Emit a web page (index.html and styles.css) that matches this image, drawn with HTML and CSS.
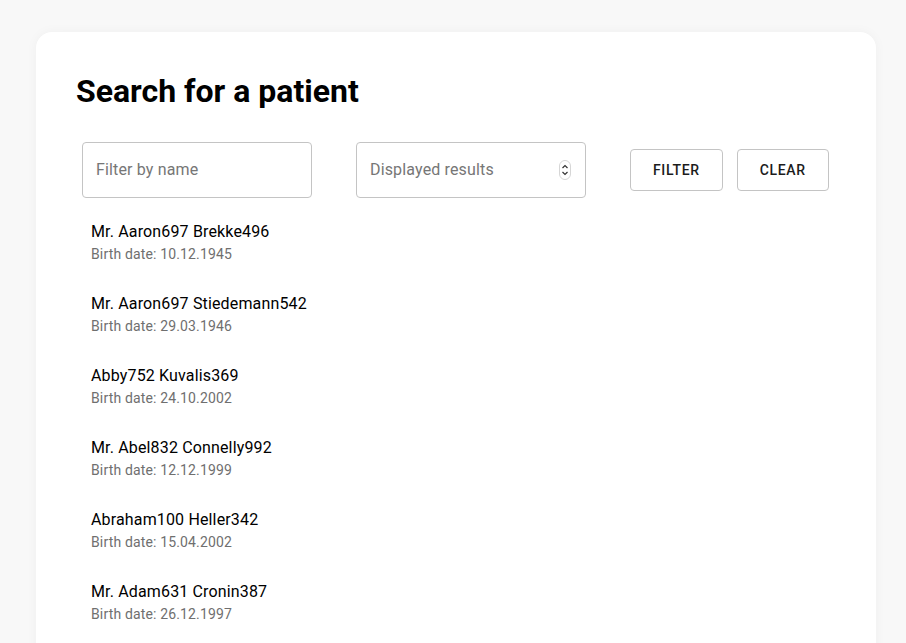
FILE: index.html
```html
<!DOCTYPE html>
<html lang="en">
<head>
<meta charset="utf-8">
<title>Search for a patient</title>
<link rel="stylesheet" href="styles.css">
</head>
<body>
<main class="card">
  <h1 class="title">Search for a patient</h1>
  <form class="filters">
    <div class="field"><input class="field-input" type="text" placeholder="Filter by name"></div>
    <div class="field">
      <input class="field-input" type="text" placeholder="Displayed results">
      <svg class="spinner" width="12" height="20" viewBox="0 0 12 20">
        <rect x="0.5" y="0.5" width="11" height="19" rx="5.5" fill="#fff" stroke="#d6d6d6"/>
        <path d="M3.5 8 L6 5.5 L8.5 8" fill="none" stroke="#333" stroke-width="1.2"/>
        <path d="M3.5 12 L6 14.5 L8.5 12" fill="none" stroke="#333" stroke-width="1.2"/>
      </svg>
    </div>
    <div class="buttons">
      <button class="btn" type="button">Filter</button>
      <button class="btn" type="button">Clear</button>
    </div>
  </form>
  <ul class="patients">
    <li class="patient"><div class="name">Mr. Aaron697 Brekke496</div><div class="dob">Birth date: 10.12.1945</div></li>
    <li class="patient"><div class="name">Mr. Aaron697 Stiedemann542</div><div class="dob">Birth date: 29.03.1946</div></li>
    <li class="patient"><div class="name">Abby752 Kuvalis369</div><div class="dob">Birth date: 24.10.2002</div></li>
    <li class="patient"><div class="name">Mr. Abel832 Connelly992</div><div class="dob">Birth date: 12.12.1999</div></li>
    <li class="patient"><div class="name">Abraham100 Heller342</div><div class="dob">Birth date: 15.04.2002</div></li>
    <li class="patient"><div class="name">Mr. Adam631 Cronin387</div><div class="dob">Birth date: 26.12.1997</div></li>
  </ul>
</main>
</body>
</html>
```
FILE: styles.css
```css
* { box-sizing: border-box; }
html, body { margin: 0; padding: 0; }
body {
  background: #f8f8f8;
  font-family: Roboto, "Liberation Sans", sans-serif;
  color: #000;
  padding: 32px 30px 0 36px;
  height: 643px;
  overflow: hidden;
}
.card {
  background: #fff;
  border-radius: 16px;
  box-shadow: 0 0 12px rgba(0,0,0,0.04);
  padding: 40px 40px 40px 40px;
  min-height: 700px;
}
.title {
  margin: 0;
  font-size: 32px;
  font-weight: 700;
  line-height: 38px;
  letter-spacing: 0;
}
.filters {
  display: flex;
  align-items: center;
  margin-top: 32px;
  padding-left: 6px;
}
.field {
  width: 230px;
  height: 56px;
  border: 1px solid #c4c4c4;
  border-radius: 4px;
  display: flex;
  align-items: center;
  padding: 0 14px 0 13px;
  margin-right: 44px;
}
.field-input {
  flex: 1;
  min-width: 0;
  border: 0;
  outline: 0;
  font-family: inherit;
  font-size: 16px;
  letter-spacing: 0.15px;
  color: #000;
  padding: 0 0 2px 0;
  background: transparent;
}
.field-input::placeholder { color: #767676; opacity: 1; }
.spinner { flex: none; }
.buttons { display: flex; gap: 14px; }
.btn {
  height: 42px;
  background: #fff;
  border: 1px solid #c4c4c4;
  border-radius: 4px;
  font-family: inherit;
  font-size: 14px;
  font-weight: 500;
  letter-spacing: 0.65px;
  text-transform: uppercase;
  color: #1c1c1c;
  padding: 0 22px;
}
.patients {
  list-style: none;
  margin: 22px 0 0 0;
  padding: 0 0 0 15px;
}
.patient { height: 72px; }
.name {
  font-size: 16px;
  line-height: 24px;
  letter-spacing: 0.15px;
}
.dob {
  font-size: 14px;
  line-height: 20px;
  letter-spacing: 0.15px;
  color: #6f6f6f;
}
```
